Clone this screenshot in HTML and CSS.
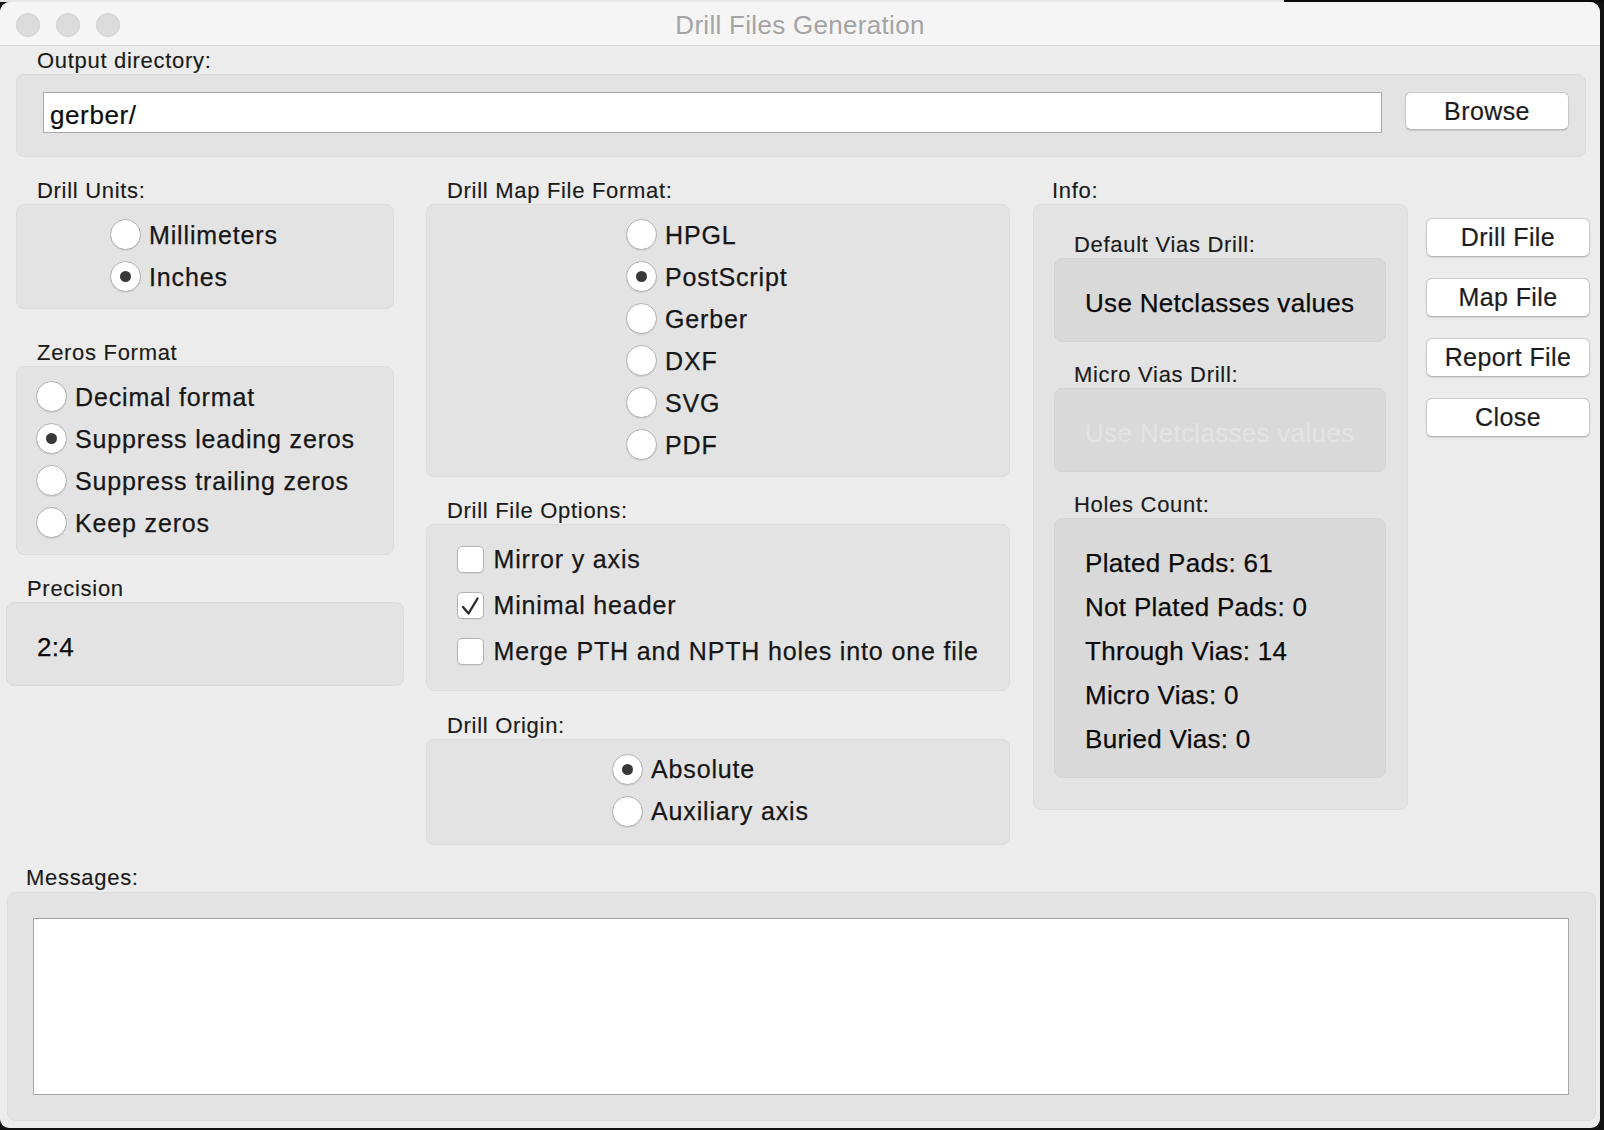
FILE: index.html
```html
<!DOCTYPE html>
<html>
<head>
<meta charset="utf-8">
<title>Drill Files Generation</title>
<link rel="stylesheet" href="styles.css">
</head>
<body>
<div class="topstrip"></div>
<div class="window">
  <div class="titlebar">
    <div class="lights"><span class="light"></span><span class="light"></span><span class="light"></span></div>
    <div class="title">Drill Files Generation</div>
    <div></div>
  </div>

  <section class="group out-group">
    <div class="glabel">Output directory:</div>
    <div class="gbox out-box">
      <div class="textinput">gerber/</div>
      <div class="btn browse">Browse</div>
    </div>
  </section>

  <div class="main">
    <div class="col col-left">
      <section class="group units-group">
        <div class="glabel">Drill Units:</div>
        <div class="gbox radios units-box">
          <div class="row"><span class="radio"></span><span class="rtext">Millimeters</span></div>
          <div class="row"><span class="radio on"></span><span class="rtext">Inches</span></div>
        </div>
      </section>
      <section class="group zeros-group">
        <div class="glabel">Zeros Format</div>
        <div class="gbox radios zeros-box">
          <div class="row"><span class="radio"></span><span class="rtext">Decimal format</span></div>
          <div class="row"><span class="radio on"></span><span class="rtext">Suppress leading zeros</span></div>
          <div class="row"><span class="radio"></span><span class="rtext">Suppress trailing zeros</span></div>
          <div class="row"><span class="radio"></span><span class="rtext">Keep zeros</span></div>
        </div>
      </section>
      <section class="group prec-group">
        <div class="glabel">Precision</div>
        <div class="gbox prec-box"><span class="stext">2:4</span></div>
      </section>
    </div>

    <div class="col col-mid">
      <section class="group">
        <div class="glabel">Drill Map File Format:</div>
        <div class="gbox radios map-box">
          <div class="row"><span class="radio"></span><span class="rtext">HPGL</span></div>
          <div class="row"><span class="radio on"></span><span class="rtext">PostScript</span></div>
          <div class="row"><span class="radio"></span><span class="rtext">Gerber</span></div>
          <div class="row"><span class="radio"></span><span class="rtext">DXF</span></div>
          <div class="row"><span class="radio"></span><span class="rtext">SVG</span></div>
          <div class="row"><span class="radio"></span><span class="rtext">PDF</span></div>
        </div>
      </section>
      <section class="group opt-group">
        <div class="glabel">Drill File Options:</div>
        <div class="gbox opt-box">
          <div class="crow"><span class="check"></span><span class="rtext">Mirror y axis</span></div>
          <div class="crow"><span class="check"><svg viewBox="0 0 27 27" width="27" height="27"><polyline points="6,15 11.5,21.5 20.5,6.5" fill="none" stroke="#2e2e2e" stroke-width="2.4" stroke-linecap="round" stroke-linejoin="round"/></svg></span><span class="rtext">Minimal header</span></div>
          <div class="crow"><span class="check"></span><span class="rtext">Merge PTH and NPTH holes into one file</span></div>
        </div>
      </section>
      <section class="group origin-group">
        <div class="glabel">Drill Origin:</div>
        <div class="gbox radios origin-box">
          <div class="row"><span class="radio on"></span><span class="rtext">Absolute</span></div>
          <div class="row"><span class="radio"></span><span class="rtext">Auxiliary axis</span></div>
        </div>
      </section>
    </div>

    <div class="col col-info">
      <section class="group">
        <div class="glabel info-label">Info:</div>
        <div class="gbox info-box">
          <div class="glabel sub-label">Default Vias Drill:</div>
          <div class="ibox via-box"><span class="stext">Use Netclasses values</span></div>
          <div class="glabel sub-label sub-next">Micro Vias Drill:</div>
          <div class="ibox via-box"><span class="stext disabled">Use Netclasses values</span></div>
          <div class="glabel sub-label sub-next">Holes Count:</div>
          <div class="ibox holes-box">
            <div class="hline stext">Plated Pads: 61</div>
            <div class="hline stext">Not Plated Pads: 0</div>
            <div class="hline stext">Through Vias: 14</div>
            <div class="hline stext">Micro Vias: 0</div>
            <div class="hline stext">Buried Vias: 0</div>
          </div>
        </div>
      </section>
    </div>

    <div class="col col-buttons">
      <div class="btn side">Drill File</div>
      <div class="btn side">Map File</div>
      <div class="btn side">Report File</div>
      <div class="btn side">Close</div>
    </div>
  </div>

  <section class="group msg-group">
    <div class="glabel msg-label">Messages:</div>
    <div class="gbox msg-box">
      <div class="textarea"></div>
    </div>
  </section>
</div>
</body>
</html>
```

FILE: styles.css
```css
* { box-sizing: border-box; }

html, body {
  margin: 0;
  padding: 0;
}

body {
  width: 1604px;
  height: 1130px;
  overflow: hidden;
  background: #121212;
  font-family: "Liberation Sans", Arial, sans-serif;
  color: #1e1e1e;
}

.topstrip {
  height: 2px;
  background: linear-gradient(to right, #e6e6e6 0, #e6e6e6 1284px, #0a0a0a 1284px);
}

.window {
  width: 1600px;
  height: 1126px;
  background: #ececec;
  border-radius: 10px 10px 9px 9px;
  overflow: hidden;
}

/* title bar */
.titlebar {
  height: 44px;
  background: #f5f5f5;
  border-bottom: 1px solid #d3d3d3;
  display: grid;
  grid-template-columns: 1fr auto 1fr;
  align-items: center;
  padding-top: 3px;
}

.lights {
  display: flex;
  gap: 16px;
  padding-left: 16px;
}

.light {
  width: 24px;
  height: 24px;
  border-radius: 50%;
  background: #dcdcdc;
  border: 1px solid #d0d0d0;
}

.title {
  font-size: 26px;
  letter-spacing: 0.3px;
  color: #a4a4a4;
}

/* groups */
.glabel {
  font-size: 22px;
  letter-spacing: 0.7px;
  line-height: 27px;
  height: 27px;
  padding-left: 21px;
  color: #1a1a1a;
  -webkit-text-stroke: 0.15px #1a1a1a;
  white-space: nowrap;
}

.gbox {
  background: #e3e3e3;
  border: 1px solid #dcdcdc;
  border-radius: 8px;
}

.out-group {
  margin: 1px 0 0 16px;
  width: 1570px;
}

.out-box {
  height: 83px;
  display: flex;
  align-items: flex-start;
  gap: 23px;
  padding: 17px 16px 0 26px;
}

.textinput {
  flex: 1;
  height: 41px;
  background: #fff;
  border: 1px solid #a9a9a9;
  font-size: 26px;
  letter-spacing: 0.6px;
  line-height: 37px;
  padding: 4px 0 0 6px;
  color: #0c0c0c;
  -webkit-text-stroke: 0.2px #0c0c0c;
}

.btn {
  background: #fff;
  border: 1px solid #c9c9c9;
  border-bottom-color: #b9b9b9;
  border-radius: 6px;
  box-shadow: 0 1px 1px rgba(0, 0, 0, 0.12);
  font-size: 25px;
  letter-spacing: 0.4px;
  color: #1c1c1c;
  -webkit-text-stroke: 0.2px #1c1c1c;
  display: flex;
  align-items: center;
  justify-content: center;
  white-space: nowrap;
}

.browse {
  width: 164px;
  height: 38px;
}

/* main area */
.main {
  display: flex;
  align-items: flex-start;
  margin: 19.5px 0 0 6px;
  height: 669px;
}

.col-left { width: 398px; }
.col-mid { width: 584px; margin-left: 22px; }
.col-info { width: 375px; margin-left: 23px; }
.col-buttons {
  width: 164px;
  margin-left: 18px;
  padding-top: 41px;
  display: flex;
  flex-direction: column;
  gap: 21px;
}

.side { height: 39px; }

.units-group, .zeros-group { margin: 0 10px; }
.zeros-group { margin-top: 30px; }
.prec-group { margin-top: 20.5px; }

/* radios */
.radios { display: flex; flex-direction: column; }

.row {
  height: 42px;
  display: flex;
  align-items: center;
}

.radio {
  width: 31px;
  height: 31px;
  flex: none;
  border-radius: 50%;
  background: #fff;
  border: 1px solid #b2b2b2;
  box-shadow: 0 1px 1px rgba(0, 0, 0, 0.08);
  margin-right: 8px;
  display: flex;
  align-items: center;
  justify-content: center;
}

.radio.on::after {
  content: "";
  width: 11px;
  height: 11px;
  border-radius: 50%;
  background: #383838;
}

.rtext {
  font-size: 25px;
  letter-spacing: 0.85px;
  line-height: 42px;
  color: #161616;
  -webkit-text-stroke: 0.25px #161616;
  white-space: nowrap;
}

.units-box { padding: 9px 0 10px 93px; }
.zeros-box { padding: 9px 0 10px 19px; }
.map-box { padding: 9px 0 10px 199px; }
.origin-box { padding: 8px 0 12px 185px; }

.opt-group { margin-top: 20.5px; }
.origin-group { margin-top: 21px; }

.opt-box { padding: 11px 0 16px 29.5px; }

.crow {
  height: 46px;
  display: flex;
  align-items: center;
}

.check {
  width: 27px;
  height: 27px;
  flex: none;
  background: #fff;
  border: 1px solid #b4b4b4;
  border-radius: 5px;
  box-shadow: 0 1px 1px rgba(0, 0, 0, 0.06);
  margin-right: 10px;
  display: flex;
}

.check svg { margin: -1px; }

/* static texts */
.stext {
  font-size: 26px;
  letter-spacing: 0.3px;
  color: #0a0a0a;
  -webkit-text-stroke: 0.25px #0a0a0a;
  white-space: nowrap;
}

.prec-box {
  height: 84px;
  display: flex;
  align-items: center;
  padding: 6px 0 0 30px;
}

/* info */
.info-label { padding-left: 19px; }

.info-box {
  padding: 26px 21px 31px 20px;
}

.sub-label { padding-left: 20px; }
.sub-next { margin-top: 19px; }

.ibox {
  background: #d9d9d9;
  border: 1px solid #d3d3d3;
  border-radius: 8px;
}

.via-box {
  height: 84px;
  display: flex;
  align-items: center;
  padding: 8px 0 0 30px;
}

.stext.disabled {
  color: #e3e3e3;
  -webkit-text-stroke: 0;
}

.holes-box {
  height: 260px;
  padding: 22px 0 16px 30px;
}

.hline {
  height: 44px;
  line-height: 44px;
}

/* messages */
.msg-group {
  margin: 18px 0 0 7px;
  width: 1589px;
}

.msg-label {
  padding-left: 19px;
  height: 28px;
  line-height: 28px;
}

.msg-box {
  height: 229px;
  padding: 25.5px 26px 24px 25px;
}

.textarea {
  height: 177px;
  background: #fff;
  border: 1px solid #a8a8a8;
  border-top-color: #9d9d9d;
}
```
